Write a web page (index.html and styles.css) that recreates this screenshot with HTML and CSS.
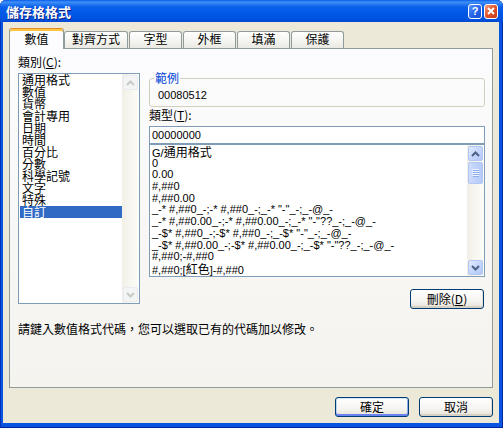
FILE: index.html
```html
<!DOCTYPE html>

<html>
<head>
    <meta charset="utf-8" />
    <link rel="stylesheet" href="styles.css">
</head>

<body>
    <div class="window">
        <div class="titlebar">
            <span class="title">儲存格格式</span>
            <span class="capbtn help">?</span>
            <span class="capbtn close">
                <svg width="8" height="8" viewBox="0 0 8 8"><path d="M1 1L7 7M7 1L1 7" stroke="#ffffff" stroke-width="2" /></svg>
            </span>
        </div>
        <div class="client">
            <div class="tabs">
                <div class="tab active">數值</div>
                <div class="tab wide">對齊方式</div>
                <div class="tab">字型</div>
                <div class="tab">外框</div>
                <div class="tab">填滿</div>
                <div class="tab">保護</div>
            </div>
            <div class="page">
                <div class="columns">
                    <div class="col_left">
                        <div class="label">類別(<u>C</u>):</div>
                        <div class="listbox category_list">
                            <ul class="rows">
                                <li>通用格式</li>
                                <li>數值</li>
                                <li>貨幣</li>
                                <li>會計專用</li>
                                <li>日期</li>
                                <li>時間</li>
                                <li>百分比</li>
                                <li>分數</li>
                                <li>科學記號</li>
                                <li>文字</li>
                                <li>特殊</li>
                                <li class="selected">自訂</li>
                            </ul>
                            <div class="scrollbar disabled">
                                <div class="sb_btn">
                                    <svg width="9" height="6" viewBox="0 0 9 6"><path d="M1 5L4.5 1.5L8 5" /></svg>
                                </div>
                                <div class="sb_btn down">
                                    <svg width="9" height="6" viewBox="0 0 9 6"><path d="M1 1L4.5 4.5L8 1" /></svg>
                                </div>
                            </div>
                        </div>
                    </div>
                    <div class="col_right">
                        <fieldset class="sample">
                            <legend>範例</legend>
                            <div class="sample_value">00080512</div>
                        </fieldset>
                        <div class="label type_label">類型(<u>T</u>):</div>
                        <div class="textbox">00000000</div>
                        <div class="listbox format_list">
                            <ul class="rows">
                                <li>G/<span class="cjk">通用格式</span></li>
                                <li>0</li>
                                <li>0.00</li>
                                <li>#,##0</li>
                                <li>#,##0.00</li>
                                <li>_-* #,##0_-;-* #,##0_-;_-* "-"_-;_-@_-</li>
                                <li>_-* #,##0.00_-;-* #,##0.00_-;_-* "-"??_-;_-@_-</li>
                                <li>_-$* #,##0_-;-$* #,##0_-;_-$* "-"_-;_-@_-</li>
                                <li>_-$* #,##0.00_-;-$* #,##0.00_-;_-$* "-"??_-;_-@_-</li>
                                <li>#,##0;-#,##0</li>
                                <li>#,##0;[<span class="cjk">紅色</span>]-#,##0</li>
                            </ul>
                            <div class="scrollbar">
                                <div class="sb_btn">
                                    <svg width="9" height="6" viewBox="0 0 9 6"><path d="M1 5L4.5 1.5L8 5" /></svg>
                                </div>
                                <div class="sb_thumb">
                                    <svg width="7" height="8" viewBox="0 0 7 8">
                                        <path d="M0 0.5H7M0 2.5H7M0 4.5H7M0 6.5H7" stroke="#eef3fe" />
                                        <path d="M1 1.5H7M1 3.5H7M1 5.5H7M1 7.5H7" stroke="#8eaeef" />
                                    </svg>
                                </div>
                                <div class="sb_btn down">
                                    <svg width="9" height="6" viewBox="0 0 9 6"><path d="M1 1L4.5 4.5L8 1" /></svg>
                                </div>
                            </div>
                        </div>
                        <div class="button_row">
                            <button class="btn">刪除(<u>D</u>)</button>
                        </div>
                    </div>
                </div>
                <p class="hint">請鍵入數值格式代碼，您可以選取已有的代碼加以修改。</p>
            </div>
            <div class="dialog_buttons">
                <button class="btn default">確定</button>
                <button class="btn">取消</button>
            </div>
        </div>
    </div>
</body>

</html>
```

FILE: styles.css
```css
* {
    box-sizing: border-box;
}

body {
    margin: 0;
    background: #ffffff;
    font-family: "Noto Sans CJK TC", "Liberation Sans", sans-serif;
    font-size: 12px;
    line-height: 12px;
    color: #000000;
}

/* window frame */

.window {
    width: 503px;
    height: 428px;
    display: flex;
    flex-direction: column;
    background: #0a55e0;
    border-radius: 6px 6px 0 0;
    overflow: hidden;
    box-shadow: inset 1px 0 #0033b8, inset -1px 0 #0026a0, inset 0 -1px #00239a;
}

.titlebar {
    height: 22px;
    flex: none;
    display: flex;
    align-items: center;
    padding: 0 5px 0 6px;
    background: linear-gradient(#0a5de9 0, #3d8ff8 2px, #2b7cf1 4px, #0a60e9 7px, #0058e6 13px, #0053df 19px, #0047d2 22px);
}

.title {
    flex: 1;
    padding-top: 1px;
    font-size: 13px;
    line-height: 13px;
    font-weight: bold;
    color: #ffffff;
    text-shadow: 1px 1px #0f1d86;
}

.capbtn {
    width: 14px;
    height: 15px;
    margin-left: 2px;
    border: 1px solid #ffffff;
    border-radius: 3px;
    display: flex;
    align-items: center;
    justify-content: center;
}

.help {
    background: linear-gradient(135deg, #5a98fa, #2462ea 55%, #1a4dcc);
    color: #ffffff;
    font-family: "Liberation Sans", sans-serif;
    font-weight: bold;
    font-size: 11px;
}

.close {
    background: linear-gradient(135deg, #f2a283, #e2582f 45%, #c53a14);
}

.client {
    flex: 1;
    margin: 0 4px 5px 3px;
    padding: 6px 6px 0;
    background: #ece9d8;
    display: flex;
    flex-direction: column;
}

/* tabs */

.tabs {
    height: 21px;
    margin-bottom: -1px;
    display: flex;
    align-items: flex-end;
    position: relative;
    z-index: 1;
}

.tab {
    width: 53px;
    height: 17px;
    margin: 0 0 1px 1px;
    padding-top: 1px;
    text-align: center;
    border: 1px solid #919b9c;
    border-bottom: none;
    border-radius: 3px 3px 0 0;
    background: linear-gradient(#ffffff, #f3f3ef 60%, #e9e8e2);
}

.tab.wide {
    width: 64px;
    margin-left: 0;
}

.tab.active {
    width: 55px;
    height: 21px;
    margin: 0;
    padding-top: 4px;
    border-top-color: #e68b2c;
    background: #fcfcfe;
    box-shadow: inset 0 2px #ffc73c;
}

.page {
    height: 340px;
    flex: none;
    padding: 7px 7px 0 8px;
    border: 1px solid #919b9c;
    background: linear-gradient(#fcfcfe, #f4f3ee);
}

.columns {
    display: flex;
    gap: 9px;
}

.col_left {
    width: 122px;
}

.col_right {
    width: 336px;
}

.label {
    height: 12px;
    white-space: nowrap;
}

/* list boxes */

.listbox {
    display: flex;
    border: 1px solid #7f9db9;
    background: #ffffff;
}

.rows {
    flex: 1;
    margin: 0;
    padding: 0;
    list-style: none;
    overflow: hidden;
}

.rows li {
    height: 12px;
    white-space: nowrap;
}

.category_list {
    height: 231px;
    margin-top: 5px;
}

.category_list .rows {
    padding-left: 1px;
}

.category_list .rows li {
    padding-left: 2px;
}

.category_list .selected {
    background: #316ac5;
    color: #ffffff;
}

.format_list {
    height: 133px;
}

.format_list .rows {
    padding: 1px 0 0 2px;
    font-family: "Liberation Sans", sans-serif;
    font-size: 11px;
}

.format_list .rows li {
    height: 11.7px;
    line-height: 11.7px;
}

.cjk {
    font-family: "Noto Sans CJK TC", sans-serif;
    font-size: 12px;
}

.scrollbar {
    width: 17px;
    flex: none;
    padding: 1px;
    display: flex;
    flex-direction: column;
    background: linear-gradient(to right, #f1efe7, #fdfdf9);
}

.sb_btn {
    height: 15px;
    border: 1px solid #b3c6f2;
    border-radius: 2px;
    background: linear-gradient(135deg, #e4ecfe, #c5d6fb 50%, #b3c9f7);
    display: flex;
    align-items: center;
    justify-content: center;
}

.sb_btn svg path {
    fill: none;
    stroke: #4d6185;
    stroke-width: 2;
}

.sb_btn.down {
    margin-top: auto;
}

.sb_thumb {
    height: 22px;
    margin-top: 1px;
    border: 1px solid #b3c6f2;
    border-radius: 2px;
    background: linear-gradient(to right, #cfdcfc, #c0d2fb 50%, #b5caf8);
    display: flex;
    align-items: center;
    justify-content: center;
}

.scrollbar.disabled .sb_btn {
    border-color: #e8ebf0;
    background: #f3f4f6;
}

.scrollbar.disabled .sb_btn svg path {
    stroke: #c8cbc4;
}

/* sample and type input */

.sample {
    margin: 16px 0 0;
    padding: 5px 4px;
    min-width: 0;
    border: 1px solid #d0d0bf;
    border-radius: 3px;
}

.sample legend {
    padding: 0 1px;
    line-height: 12px;
    color: #0046d5;
}

.sample_value {
    padding-left: 4px;
    font-family: "Liberation Sans", sans-serif;
    font-size: 11px;
}

.type_label {
    margin-top: 2px;
}

.textbox {
    height: 18px;
    margin-top: 5px;
    padding: 0 2px;
    border: 1px solid #7f9db9;
    background: #ffffff;
    font-family: "Liberation Sans", sans-serif;
    font-size: 11px;
    line-height: 16px;
}

/* buttons */

.btn {
    width: 74px;
    height: 20px;
    padding: 0;
    font: inherit;
    line-height: 12px;
    color: #000000;
    border: 1px solid #003c74;
    border-radius: 3px;
    background: linear-gradient(#ffffff, #f5f4f0 60%, #e6e2d8);
    box-shadow: inset 0 -2px #d6d0c5, inset -1px 0 #e2ded4;
}

.btn.default {
    box-shadow: inset 0 1px #cee7ff, inset 0 -2px #6982ee, inset 1px 0 #bcd4f6, inset -1px 0 #89ade4;
}

.button_row {
    margin-top: 12px;
    padding-right: 1px;
    display: flex;
    justify-content: flex-end;
}

.hint {
    margin: 14px 0 0;
}

.dialog_buttons {
    margin-top: 9px;
    display: flex;
    justify-content: flex-end;
    gap: 10px;
}
```
